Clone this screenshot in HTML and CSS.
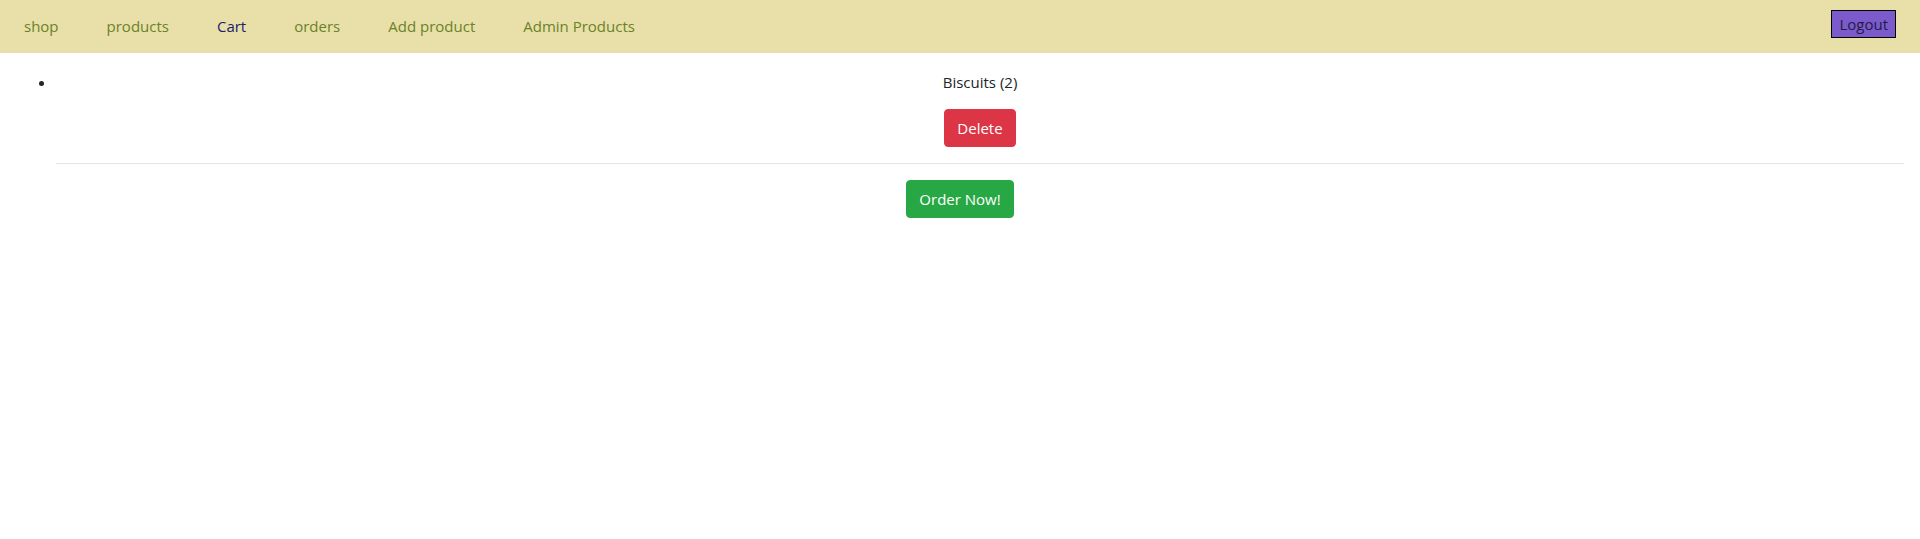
FILE: index.html
```html
<!DOCTYPE html>
<html>
<head>
<meta charset="utf-8">
<title>Cart</title>
<link rel="stylesheet" href="styles.css">
</head>
<body>
<header class="main-header">
  <nav class="main-nav">
    <ul class="nav-list">
      <li><a class="nav-link" href="#">shop</a></li>
      <li><a class="nav-link" href="#">products</a></li>
      <li><a class="nav-link active" href="#">Cart</a></li>
      <li><a class="nav-link" href="#">orders</a></li>
      <li><a class="nav-link" href="#">Add product</a></li>
      <li><a class="nav-link" href="#">Admin Products</a></li>
    </ul>
    <button class="logout-btn" type="button">Logout</button>
  </nav>
</header>
<main class="content">
  <ul class="cart-list">
    <li class="cart-item">
      <p class="cart-title">Biscuits (2)</p>
      <form class="cart-form">
        <button class="btn btn-danger" type="button">Delete</button>
      </form>
      <hr class="divider">
    </li>
  </ul>
  <div class="order-row">
    <button class="btn btn-success" type="button">Order Now!</button>
  </div>
</main>
</body>
</html>
```

FILE: styles.css
```css
* { box-sizing: border-box; }

body {
  margin: 0;
  font-family: "Open Sans", "Noto Sans", "Liberation Sans", sans-serif;
  font-size: 15px;
  line-height: 24px;
  color: #212529;
  background: #fff;
}

.main-header {
  background: #e8e0a8;
  height: 53px;
}

.main-nav {
  height: 100%;
  display: flex;
  align-items: center;
  justify-content: space-between;
  padding: 0 24px 2px 24px;
}

.nav-list {
  list-style: none;
  margin: 0;
  padding: 0;
  display: flex;
  gap: 48px;
}

.nav-link {
  text-decoration: none;
  color: #6b8228;
  font-size: 15px;
}

.nav-link.active {
  color: #231c6e;
}

.logout-btn {
  font: inherit;
  font-size: 15px;
  line-height: 20px;
  height: 28px;
  padding: 0 7px;
  background: #7b5bcb;
  color: #221a48;
  border: 1px solid #000;
  border-radius: 0;
  align-self: flex-start;
  margin-top: 10px;
}

.content {
  padding: 17px 16px 0;
}

.cart-list {
  margin: 0;
  padding-left: 40px;
}

.cart-item {
  text-align: center;
}

.cart-title {
  margin: 0 0 15px;
  font-size: 15px;
}

.cart-form {
  margin: 0;
}

.btn {
  font: inherit;
  font-size: 15px;
  line-height: 24px;
  padding: 6px 12px;
  border: 1px solid transparent;
  border-radius: 4px;
  color: #fff;
  cursor: pointer;
}

.btn-danger {
  background: #dc3545;
  border-color: #dc3545;
}

.btn-success {
  background: #28a745;
  border-color: #28a745;
}

.divider {
  margin: 16px 0;
  border: 0;
  border-top: 1px solid rgba(0, 0, 0, 0.1);
}

.order-row {
  text-align: center;
}
```
